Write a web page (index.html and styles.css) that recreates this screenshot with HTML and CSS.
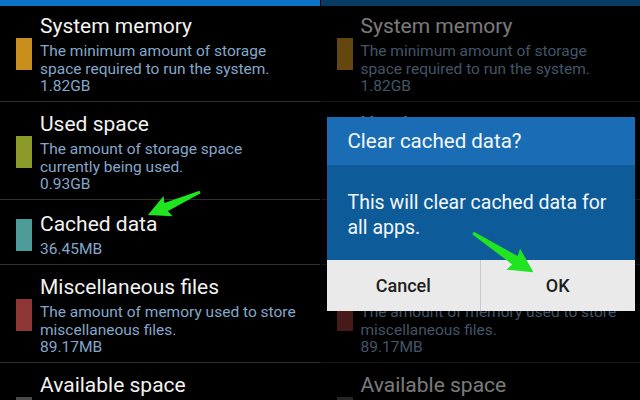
FILE: index.html
```html
<!DOCTYPE html>
<html>
<head>
<meta charset="utf-8">
<link rel="stylesheet" href="styles.css">
</head>
<body>
<div class="screen">
  <section class="panel">
    <div class="topbar"></div>
    <ul class="list">
      <li class="row"><span class="swatch sys"></span><div class="text"><div class="title">System memory</div><div class="desc">The minimum amount of storage<br>space required to run the system.</div><div class="desc">1.82GB</div></div></li>
      <li class="row"><span class="swatch used"></span><div class="text"><div class="title">Used space</div><div class="desc">The amount of storage space<br>currently being used.</div><div class="desc">0.93GB</div></div></li>
      <li class="row short"><span class="swatch cache"></span><div class="text"><div class="title">Cached data</div><div class="desc">36.45MB</div></div></li>
      <li class="row"><span class="swatch misc"></span><div class="text"><div class="title">Miscellaneous files</div><div class="desc">The amount of memory used to store<br>miscellaneous files.</div><div class="desc">89.17MB</div></div></li>
      <li class="row last"><span class="swatch avail"></span><div class="text"><div class="title">Available space</div></div></li>
    </ul>
  </section>
  <section class="panel dim">
    <div class="topbar"></div>
    <ul class="list">
      <li class="row"><span class="swatch sys"></span><div class="text"><div class="title">System memory</div><div class="desc">The minimum amount of storage<br>space required to run the system.</div><div class="desc">1.82GB</div></div></li>
      <li class="row"><span class="swatch used"></span><div class="text"><div class="title">Used space</div><div class="desc">The amount of storage space<br>currently being used.</div><div class="desc">0.93GB</div></div></li>
      <li class="row short"><span class="swatch cache"></span><div class="text"><div class="title">Cached data</div><div class="desc">36.45MB</div></div></li>
      <li class="row"><span class="swatch misc"></span><div class="text"><div class="title">Miscellaneous files</div><div class="desc">The amount of memory used to store<br>miscellaneous files.</div><div class="desc">89.17MB</div></div></li>
      <li class="row last"><span class="swatch avail"></span><div class="text"><div class="title">Available space</div></div></li>
    </ul>
    <div class="shade"></div>
    <div class="dialog">
      <div class="dlg-title">Clear cached data?</div>
      <div class="dlg-body">This will clear cached data for all apps.</div>
      <div class="dlg-buttons"><button class="btn">Cancel</button><button class="btn">OK</button></div>
    </div>
  </section>
  <svg class="arrows" width="640" height="400" viewBox="0 0 640 400">
    <g transform="translate(200 192) rotate(156.1)">
      <polygon class="arrow" points="0,-1.5 37,-4.5 35,-11 57,0 35,11 37,4.5 0,1.5"/>
    </g>
    <g transform="translate(473 233) rotate(33)">
      <polygon class="arrow" points="0,-1.5 50,-5 48,-12.5 72,0 48,12.5 50,5 0,1.5"/>
    </g>
  </svg>
</div>
</body>
</html>
```

FILE: styles.css
```css
* { box-sizing: border-box; }
html, body { margin: 0; padding: 0; background: #000; }
body { font-family: Roboto, "Noto Sans", sans-serif; width: 640px; height: 400px; overflow: hidden; }
.screen { position: relative; display: flex; width: 640px; height: 400px; gap: 1px; background: #000; }
.panel { position: relative; flex: 1 1 0; height: 400px; overflow: hidden; background: #000; }
.topbar { height: 6px; background: #0b73c6; }
.list { list-style: none; margin: 0; padding: 0; }
.row { display: flex; align-items: center; gap: 8px; padding: 9px 0 5.5px 16px; border-bottom: 1px solid #2e2e2e; }
.row:first-child { padding-top: 7px; }
.row.short { padding-top: 11px; }
.row.last { align-items: flex-start; }
.row.last .swatch { margin-top: 25px; }
.swatch { width: 16px; height: 32px; flex: 0 0 16px; }
.sys { background: #c98f1c; }
.used { background: #8c9a2a; }
.cache { background: #4d9c99; }
.misc { background: #8e3535; }
.avail { background: #4a4a4a; }
.text { display: flex; flex-direction: column; }
.title { color: #f2f2f2; font-size: 21px; line-height: 26px; margin-bottom: 4px; }
.desc { color: #82a8cc; font-size: 15.5px; line-height: 17.5px; }
.dim .topbar { background: #083a62; }
.shade { position: absolute; inset: 6px 0 0 0; background: rgba(0, 0, 0, 0.5); }
.dialog { position: absolute; left: 6px; top: 117px; width: 308px; display: flex; flex-direction: column; }
.dlg-title { height: 48px; background: #1a6db4; color: #f4f8fc; font-size: 20.5px; line-height: 49px; padding-left: 21px; }
.dlg-body { height: 95px; background: #0e5b99; color: #f4f8fc; font-size: 19.5px; line-height: 25px; padding: 25px 20px 0 21px; }
.dlg-buttons { display: flex; height: 51px; background: #eaeaea; }
.btn { flex: 1 1 0; border: 0; background: transparent; font-family: Roboto, "Noto Sans", sans-serif; font-size: 18px; font-weight: 500; color: #1e1e1e; padding: 0; }
.btn + .btn { border-left: 1px solid #c9c9c9; }
.arrows { position: absolute; left: 0; top: 0; pointer-events: none; }
.arrow { fill: #1fe41f; }
```
